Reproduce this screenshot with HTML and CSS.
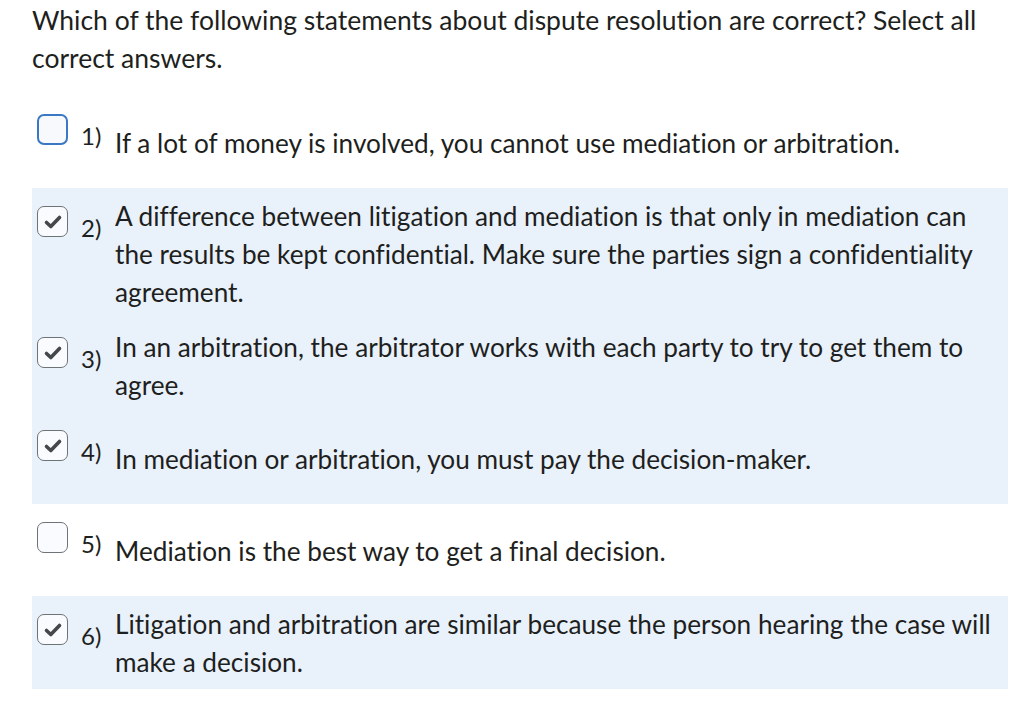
FILE: index.html
```html
<!DOCTYPE html>
<html lang="en">
<head>
<meta charset="utf-8">
<title>Quiz question</title>
<link rel="stylesheet" href="styles.css">
</head>
<body>
<main class="page">
  <p class="prompt">Which of the following statements about dispute resolution are correct? Select all correct answers.</p>
  <ul class="options">
    <li class="option">
      <span class="check check-focus"></span>
      <span class="num">1)</span>
      <span class="text">If a lot of money is involved, you cannot use mediation or arbitration.</span>
    </li>
    <li class="option selected">
      <span class="check"><svg viewBox="0 0 30 30" width="30" height="30"><path d="M8.5 15.5 L12.8 19.5 L21.5 10.5" fill="none" stroke="#45484a" stroke-width="3.6" stroke-linecap="round" stroke-linejoin="round"/></svg></span>
      <span class="num">2)</span>
      <span class="text">A difference between litigation and mediation is that only in mediation can the results be kept confidential. Make sure the parties sign a confidentiality agreement.</span>
    </li>
    <li class="option selected">
      <span class="check"><svg viewBox="0 0 30 30" width="30" height="30"><path d="M8.5 15.5 L12.8 19.5 L21.5 10.5" fill="none" stroke="#45484a" stroke-width="3.6" stroke-linecap="round" stroke-linejoin="round"/></svg></span>
      <span class="num">3)</span>
      <span class="text">In an arbitration, the arbitrator works with each party to try to get them to agree.</span>
    </li>
    <li class="option selected">
      <span class="check"><svg viewBox="0 0 30 30" width="30" height="30"><path d="M8.5 15.5 L12.8 19.5 L21.5 10.5" fill="none" stroke="#45484a" stroke-width="3.6" stroke-linecap="round" stroke-linejoin="round"/></svg></span>
      <span class="num">4)</span>
      <span class="text">In mediation or arbitration, you must pay the decision-maker.</span>
    </li>
    <li class="option">
      <span class="check"></span>
      <span class="num">5)</span>
      <span class="text">Mediation is the best way to get a final decision.</span>
    </li>
    <li class="option selected">
      <span class="check"><svg viewBox="0 0 30 30" width="30" height="30"><path d="M8.5 15.5 L12.8 19.5 L21.5 10.5" fill="none" stroke="#45484a" stroke-width="3.6" stroke-linecap="round" stroke-linejoin="round"/></svg></span>
      <span class="num">6)</span>
      <span class="text">Litigation and arbitration are similar because the person hearing the case will make a decision.</span>
    </li>
  </ul>
</main>
</body>
</html>
```

FILE: styles.css
```css
html, body {
  margin: 0;
  padding: 0;
  background: #ffffff;
}

body {
  font-family: Lato, "Noto Sans", sans-serif;
  color: #1e1f20;
  font-variant-ligatures: none;
}

.page {
  padding: 1px 16px 0 32px;
}

.prompt {
  margin: 0 0 19px 0;
  font-size: 26.5px;
  line-height: 38px;
}

.options {
  list-style: none;
  margin: 0;
  padding: 0;
}

.option {
  display: flex;
  align-items: flex-start;
  box-sizing: border-box;
  min-height: 92px;
  padding: 9px 4px 8px 0;
}

.option.selected {
  background: #e9f1fb;
}

.check {
  flex: 0 0 auto;
  box-sizing: border-box;
  width: 31px;
  height: 31px;
  margin: 9px 0 0 5px;
  border: 1.8px solid #6e7377;
  border-radius: 7px;
  background: #fafbfe;
  display: flex;
  align-items: center;
  justify-content: center;
}

.check svg {
  display: block;
  flex: 0 0 auto;
}

.check-focus {
  border: 2.5px solid #3b78c4;
  border-radius: 7px;
  background: #f7f9fd;
}

.num {
  flex: 0 0 auto;
  width: 34px;
  margin: 17px 0 0 13px;
  font-size: 24px;
  line-height: 28px;
}

.text {
  flex: 1 1 auto;
  align-self: center;
  font-size: 26.2px;
  line-height: 38px;
}
```
